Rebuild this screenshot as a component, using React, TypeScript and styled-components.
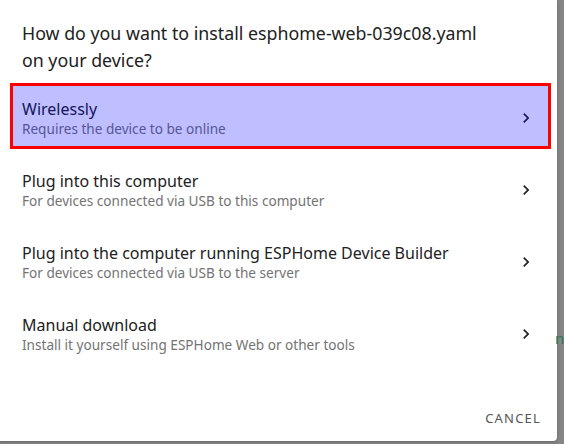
import React from 'react';
import styled, {createGlobalStyle} from 'styled-components';

const GlobalStyle = createGlobalStyle`
  html, body {
    margin: 0;
    padding: 0;
  }
  body {
    font-family: 'Noto Sans', 'Open Sans', sans-serif;
    -webkit-font-smoothing: antialiased;
  }
`;

const Backdrop = styled.div`
  display: flex;
  width: 564px;
  height: 444px;
  overflow: hidden;
  background: #858585;
`;

const Dialog = styled.div`
  display: flex;
  flex-direction: column;
  flex: 0 0 557px;
  height: 441px;
  background: #ffffff;
  border-bottom-right-radius: 4px;
  box-shadow: 0 1px 3px rgba(0, 0, 0, 0.25);
`;

const Title = styled.h2`
  margin: 0;
  padding: 20px 22px 0;
  font-size: 17.8px;
  font-weight: 400;
  line-height: 27px;
  color: #212121;
`;

const List = styled.ul`
  list-style: none;
  margin: 6px 0 0;
  padding: 0;
`;

const Item = styled.li`
  position: relative;
  display: flex;
  align-items: center;
  height: 72px;
  padding: 0 22px;
  box-sizing: border-box;
  cursor: pointer;
`;

const Texts = styled.div`
  flex: 1;
  display: flex;
  flex-direction: column;
  padding-top: 5px;
`;

const Primary = styled.span`
  font-size: 16px;
  line-height: 20px;
  color: #212121;
`;

const Secondary = styled.span`
  font-size: 13.6px;
  line-height: 20px;
  color: #737373;
`;

const Chevron = styled.svg`
  width: 20px;
  height: 20px;
  margin-top: 3px;
  margin-right: -1px;
  fill: #212121;
`;

/* focus highlight drawn over the first option */
const Highlight = styled.div`
  position: absolute;
  top: 3px;
  bottom: 3px;
  left: 10px;
  right: 6px;
  border: 3px solid #ff0000;
  background: rgba(0, 0, 255, 0.25);
  pointer-events: none;
`;

const Actions = styled.div`
  margin-top: auto;
  display: flex;
  justify-content: flex-end;
  padding: 0 8px 5px;
`;

const TextButton = styled.button`
  height: 36px;
  padding: 0 8px;
  border: none;
  background: none;
  font-family: inherit;
  font-size: 13px;
  font-weight: 400;
  letter-spacing: 1.2px;
  text-transform: uppercase;
  color: #555555;
  cursor: pointer;
`;

const Behind = styled.div`
  padding-top: 328px;
  margin-left: -2px;
  font-size: 15px;
  color: #1f7a62;
`;

const options = [
  {title: 'Wirelessly', sub: 'Requires the device to be online', focused: true},
  {title: 'Plug into this computer', sub: 'For devices connected via USB to this computer'},
  {
    title: 'Plug into the computer running ESPHome Device Builder',
    sub: 'For devices connected via USB to the server',
  },
  {title: 'Manual download', sub: 'Install it yourself using ESPHome Web or other tools'},
];

const ChevronRight = () => (
  <Chevron viewBox="0 0 24 24">
    <path d="M8.59,16.58L13.17,12L8.59,7.41L10,6L16,12L10,18L8.59,16.58Z" />
  </Chevron>
);

export default function App() {
  return (
    <>
      <GlobalStyle />
      <Backdrop>
        <Dialog>
          <Title>
            How do you want to install esphome-web-039c08.yaml
            <br />
            on your device?
          </Title>
          <List>
            {options.map((o) => (
              <Item key={o.title}>
                <Texts>
                  <Primary>{o.title}</Primary>
                  <Secondary>{o.sub}</Secondary>
                </Texts>
                <ChevronRight />
                {o.focused && <Highlight />}
              </Item>
            ))}
          </List>
          <Actions>
            <TextButton>Cancel</TextButton>
          </Actions>
        </Dialog>
        <Behind>n</Behind>
      </Backdrop>
    </>
  );
}
